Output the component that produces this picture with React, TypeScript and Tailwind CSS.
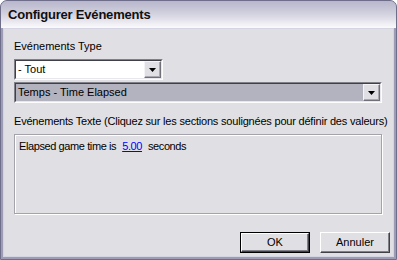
import React from "react";

const Arrow = () => (
  <svg width="7" height="4" viewBox="0 0 7 4">
    <path d="M0 0h7L3.5 4z" fill="#000" />
  </svg>
);

const DropButton = () => (
  <div className="flex h-[17px] w-[17px] items-center justify-center border border-t-[#f4f4f6] border-l-[#f4f4f6] border-b-[#707078] border-r-[#707078] bg-[#e0dfe3] shadow-[inset_-1px_-1px_0_#a8a8b0]">
    <Arrow />
  </div>
);

const Combo = ({ text, wide, dark }: { text: string; wide?: boolean; dark?: boolean }) => (
  <div
    className={
      "flex h-[21px] items-center border border-t-[#808088] border-l-[#808088] border-b-[#fdfdfd] border-r-[#fdfdfd] " +
      (wide ? "w-[368px]" : "w-[149px]")
    }
  >
    <div
      className={
        "flex h-full flex-1 items-center border border-t-[#404048] border-l-[#404048] border-b-[#e8e8ec] border-r-[#e8e8ec] pl-[2px] pr-[0px] " +
        (dark ? "bg-[#b3b2bf]" : "bg-white")
      }
    >
      <span className="flex-1">{text}</span>
      <DropButton />
    </div>
  </div>
);

const Button = ({ label, def }: { label: string; def?: boolean }) => (
  <div className={"h-[21px] w-[70px] " + (def ? "border border-black" : "")}>
    <div className="flex h-full w-full items-center justify-center border border-t-white border-l-white border-b-[#404048] border-r-[#404048] bg-[#e0dfe3] shadow-[inset_-1px_-1px_0_#808088]">
      {label}
    </div>
  </div>
);

export default function App() {
  return (
    <div className="h-[260px] w-[397px] bg-white">
      <div
        className="flex h-[260px] w-[397px] flex-col rounded-t-[7px] border border-[#6e6d8a] bg-[#9d9cb5] text-[11px] text-black"
        style={{ fontFamily: '"Liberation Sans", Arial, sans-serif' }}
      >
        <div className="flex h-[27px] items-center rounded-t-[6px] bg-gradient-to-b from-[#b7b6cb] via-[#d4d3e0] to-[#fbfbfd] pl-[7px] pt-[1px]">
          <span className="text-[13px] font-bold tracking-[-0.2px] text-[#101010]">Configurer Evénements</span>
        </div>
        <div className="mx-[2px] mb-[2px] flex flex-1 flex-col border-l border-r border-b border-t border-[#d5d4e2] bg-[#e0dfe3] pl-[10px] pt-[10px]">
          <div className="h-[14px] leading-[14px]">Evénements Type</div>
          <div className="mt-[6px]">
            <Combo text="- Tout" />
          </div>
          <div className="mt-[2px]">
            <Combo text="Temps - Time Elapsed" wide dark />
          </div>
          <div className="mt-[11px] h-[14px] whitespace-nowrap leading-[14px] tracking-[-0.2px]">
            Evénements Texte (Cliquez sur les sections soulignées pour définir des valeurs)
          </div>
          <div className="mt-[6px] h-[80px] w-[368px] border border-[#a4a3ac] pl-[4px] pt-[3px] tracking-[-0.4px] shadow-[inset_1px_1px_0_#fff,1px_1px_0_#fff]">
            <span>Elapsed game time is</span>
            <span className="mx-[6px] text-[#0000ff] underline">5.00</span>
            <span>seconds</span>
          </div>
          <div className="mt-[18px] flex justify-end gap-[10px] pr-[3px]">
            <Button label="OK" def />
            <Button label="Annuler" />
          </div>
        </div>
      </div>
    </div>
  );
}
